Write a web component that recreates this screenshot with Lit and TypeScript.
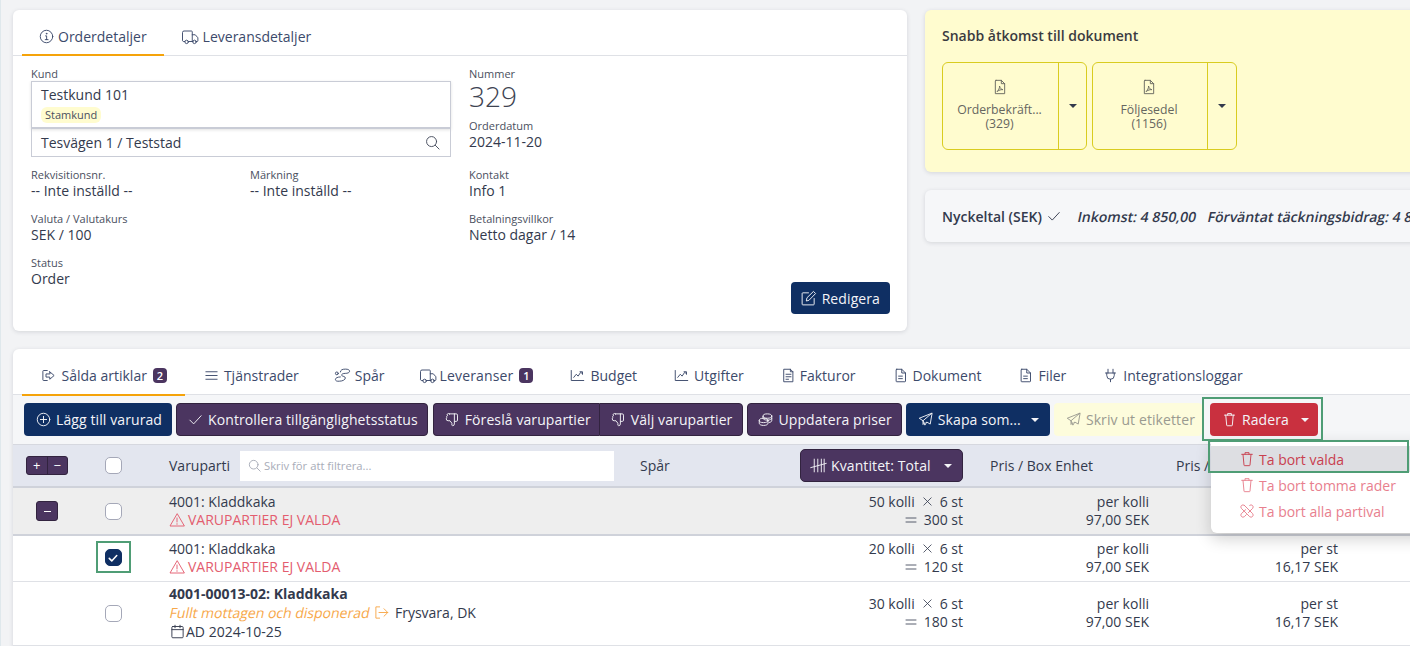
import { LitElement, html, css, svg } from "lit";
import { customElement } from "lit/decorators.js";

const paths: Record<string, any> = {
  info: svg`<circle cx="12" cy="12" r="10"/><path d="M10.500 11h1.700v6M10 17h4.500"/><circle cx="12" cy="7.500" r=".6"/>`,
  truck: svg`<path d="M5 18H3a2 2 0 0 1-1-1V6a2 2 0 0 1 2-2h10a1 1 0 0 1 1 1v13H10"/><path d="M15 9h4l3.500 4v4a1 1 0 0 1-1 1H20"/><path d="M15 18h1"/><circle cx="7.500" cy="18.500" r="2.300"/><circle cx="18" cy="18.500" r="2.300"/>`,
  search: svg`<circle cx="10.500" cy="10.500" r="8"/><path d="m16.500 16.500 6 6"/>`,
  pdf: svg`<path d="M6 2h8l5 5v15H5V3a1 1 0 0 1 1-1z"/><path d="M14 2v5h5"/><path d="M8 18.500c2-1.500 3.500-5 3.300-8 1 3.500 2.500 5 5 5.500-3-.2-5.500.5-8.300 2.500z"/>`,
  check: svg`<path d="M3 13l6 6L21 6"/>`,
  edit: svg`<path d="M12 4H4a1 1 0 0 0-1 1v15a1 1 0 0 0 1 1h15a1 1 0 0 0 1-1v-8"/><path d="M9 15l.8-4L19 2l3 3-9 9.200z"/>`,
  export: svg`<path d="M10 4H4a1 1 0 0 0-1 1v14a1 1 0 0 0 1 1h6"/><path d="M14 6l7 6-7 6v-3.500H8v-5h6z"/>`,
  lines: svg`<path d="M3 6h18M3 12h18M3 18h18"/>`,
  trace: svg`<path d="M9 7c0-3 3-4 7-4s6 1 6 3-3 3-6 3c-3 0-6 1-5 3 1 1.500 5 1 5 3.500S12 20 8 20c-4 .5-6-.5-6-2.500S5 14 9 14"/><circle cx="4" cy="9" r="2"/>`,
  chart: svg`<path d="M2 4v16h20"/><path d="M6 15l4-5 3 3 4-6 3 2"/><path d="M16 6h4v4"/>`,
  invoice: svg`<path d="M5 2h10l4 4v16H5z"/><path d="M15 2v4h4M8 10h8M8 14h8M8 18h4"/>`,
  doc: svg`<path d="M6 2h8l6 6v13a1 1 0 0 1-1 1H6a1 1 0 0 1-1-1V3a1 1 0 0 1 1-1z"/><path d="M14 2v6h6M9 13h6M9 17h6"/>`,
  plug: svg`<path d="M8 2v6M16 2v6M4 8h16M6 8v4a6 6 0 0 0 12 0V8M12 18v4"/>`,
  plus: svg`<circle cx="12" cy="12" r="10"/><path d="M12 7v10M7 12h10"/>`,
  thumb: svg`<path d="M7 3h11a2 2 0 0 1 2 2v8a2 2 0 0 1-2 2h-3v4a3 3 0 0 1-3 3l-1-1v-3l-3-4H5a3 3 0 0 1-3-3 2 2 0 0 1 1-2 2 2 0 0 1 1-3 2 2 0 0 1 3-3z"/><path d="M15 3v12"/>`,
  coins: svg`<ellipse cx="15" cy="6.500" rx="7" ry="3.500"/><path d="M8 7v3c0 1.500 3 3 7 3s7-1.500 7-3V6.500M22 10v4c0 1.200-1.500 2.300-4 2.800"/><ellipse cx="9" cy="13.500" rx="7" ry="3.500"/><path d="M2 13.500V18c0 2 3 3.500 7 3.500s7-1.500 7-3.500v-4.500"/>`,
  send: svg`<path d="M22 2L2 10l6 4 3 7 3-5 5 3z"/><path d="M22 2L8 14v6l3-3"/>`,
  trash: svg`<path d="M4 5h16M9 5V2.500h6V5M6 5l1.500 16a1 1 0 0 0 1 1h7a1 1 0 0 0 1-1L18 5"/>`,
  tally: svg`<path d="M6 3v18M11 3v18M16 3v18M20 3v18M1 15l22-6"/>`,
  warn: svg`<path d="M12 3L1.500 21h21z"/><path d="M12 9v6M12 17.500v1"/>`,
  arrowbox: svg`<path d="M9 3H3v18h6M8 12h14M16 6l6 6-6 6"/>`,
  cal: svg`<rect x="3" y="4" width="18" height="18" rx="1.500"/><path d="M3 9h18M8 2v4M16 2v4"/>`,
  unlink: svg`<path d="M8 3.500l12.500 12.500a3.200 3.200 0 0 1-4.500 4.500L3.500 8a3.200 3.200 0 0 1 4.500-4.500z"/><path d="M16 3.500a3.200 3.200 0 0 1 4.500 4.500L14 14.500M10 10l-6.500 6a3.200 3.200 0 0 0 4.500 4.500l3-3"/>`,
  times: svg`<path d="M4 4l16 16M20 4L4 20"/>`,
  equals: svg`<path d="M2 8h20M2 16h20"/>`,
};

const ico = (n: string, size = 15, sw = 1.500) => html`<svg class="ico i-${n}" width=${size} height=${size} viewBox="0 0 24 24" fill="none" stroke="currentColor" stroke-width=${(sw * 24) / size / 1.600} stroke-linecap="round" stroke-linejoin="round">${paths[n]}</svg>`;

@customElement("app-root")
export class AppRoot extends LitElement {
  static styles = css`
    :host { display: block; width: 1410px; height: 646px; overflow: hidden; position: relative; background: #f2f3f5; font-family: "Open Sans", sans-serif; font-size: 14px; color: #333a4d; line-height: 19px; }
    * { box-sizing: border-box; }
    .ico { flex: none; display: block; }
    .page { display: grid; grid-template-columns: 894px 700px; column-gap: 18px; padding: 10px 0 0 13px; row-gap: 18px; width: 1700px; }
    .card { background: #fff; border-radius: 6px; box-shadow: 0 1px 4px rgba(40,50,70,.15); }
    .details { grid-row: span 2; height: 321px; position: relative; }
    .side { display: flex; flex-direction: column; gap: 18px; }
    .tabs { display: flex; border-bottom: 1px solid #dfe1e6; padding-left: 9px; color: #3c4a6b; }
    .tab { display: flex; align-items: center; gap: 4px; height: 45px; padding: 7px 17px 0; position: relative; }
    .tab.on::after { content: ""; position: absolute; left: 0; right: 0; bottom: -1px; height: 2px; background: #f5a30a; }
    .dbody { padding: 10px 18px 0; display: grid; grid-template-columns: 219px 219px 1fr; }
    .lbl { font-size: 11px; line-height: 15px; color: #4a4f5e; }
    .val { line-height: 18px; }
    .cust { grid-column: span 2; width: 420px; }
    .cbox { border: 1px solid #c9ccd6; height: 48px; padding: 3px 9px 0; box-shadow: 0 1px 3px rgba(0,0,0,.12); border-bottom-width: 2px; }
    .tag { display: inline-block; font-size: 11px; line-height: 16px; background: #fffccf; border-radius: 6px; padding: 0 4px; color: #4a4f5e; margin-top: 2px; }
    .abox { border: 1px solid #c9ccd6; border-top: 0; height: 28px; padding: 0 9px; display: flex; align-items: center; justify-content: space-between; }
    .abox .ico { color: #444b5c; margin-right: 1px; }
    .num { font-size: 28px; font-weight: 300; line-height: 31px; color: #3d4352; margin-bottom: 6px; }
    .f { margin-bottom: 11px; }
    .r2 { margin-top: 10px; }
    .btn { display: inline-flex; align-items: center; gap: 5px; height: 33px; padding: 0 10px 0 12px; border-radius: 4px; color: #f4f4f8; white-space: nowrap; letter-spacing: .1px; }
    .btn.edit { position: absolute; right: 17px; bottom: 17px; height: 32px; padding: 0 10px 0 9px; }
    .navy { background: #0f2f63; }
    .purple { background: #4b3560; border: 1px solid #32233f; padding: 0 9px 0 11px; }
    .red { background: #c9303f; }
    .pale { background: #fdfcdc; color: #9a9a90; padding-right: 7px; }
    .yellow { background: #fffccf; height: 162px; padding: 16px 17px; box-shadow: 0 1px 4px rgba(40,50,70,.15); }
    .yt { font-weight: 600; color: #3a3a40; margin-bottom: 17px; }
    .docs { display: flex; gap: 5px; }
    .doc { display: flex; height: 88px; border: 1px solid #d9cc20; border-radius: 6px; }
    .docm { display: flex; flex-direction: column; align-items: center; justify-content: center; border-right: 1px solid #d9cc20; font-size: 12.25px; line-height: 14px; color: #66665f; gap: 8px; padding: 0 2px 2px 0; }
    .docm div { text-align: center; }
    .docc { width: 27px; display: flex; align-items: center; justify-content: center; color: #333a4d; }
    .doc + .doc .docc { width: 28px; }
    .caret { width: 0; height: 0; border-left: 4px solid transparent; border-right: 4px solid transparent; border-top: 4px solid currentColor; flex: none; }
    .key { background: #f6f7f9; height: 52px; display: flex; align-items: center; padding: 0 17px; gap: 12px; white-space: nowrap; box-shadow: 0 1px 4px rgba(40,50,70,.15); border-radius: 6px; }
    .key b { font-weight: 600; display: flex; align-items: center; gap: 5px; color: #333a4d; margin-right: 5px; }
    .slant { display: inline-block; transform: skewX(-12deg); }
    .key .slant { font-weight: 600; }
    .lower { grid-column: 1 / -1; height: 320px; border-radius: 6px 0 0 0; }
    .tabs2 { height: 46px; padding-left: 9px; padding-top: 1px; }
    .tabs2 .tab { height: 45px; padding: 5px 18.5px 0; gap: 5px; }
    .tabs2 .i-export { margin-right: 1px; }
    .tabs2 .i-trace { margin-left: -2px; margin-right: -1px; }
    .tabs2 .i-truck { margin-left: -3px; margin-right: -2px; }
    .tabs2 .i-invoice { margin-right: -1px; }
    .wide { letter-spacing: .15px; }
    .tab > .i-truck { margin-top: 1px; }
    .badge { background: #4b3560; color: #fff; font-size: 11px; font-weight: 600; line-height: 15px; border-radius: 4px; width: 14px; text-align: center; margin-left: 1px; letter-spacing: 0; }
    .bar { display: flex; gap: 4px; background: #f5f6f8; padding: 8px 11px; height: 50px; border-bottom: 1px solid #d6d8df; }
    .split { display: flex; margin-left: 1px; }
    .split .btn:first-child { border-radius: 4px 0 0 4px; border-right: 0; padding-right: 8px; }
    .split .btn:last-child { border-radius: 0 4px 4px 0; padding-right: 10px; }
    .tight { padding-left: 10px; }
    .skapa { padding-right: 11px; }
    .row { display: grid; grid-template-columns: 72px 56px 28px 471px 160px 163px 186px 189px; align-items: center; border-bottom: 1px solid #dfe1e6; width: 1397px; }
    .head { height: 43px; background: #e3e6ef; border-bottom: 2px solid #cfd2da; }
    .g { background: #eeeeee; height: 48px; border-bottom: 2px solid #cfd2da; padding-bottom: 1px; }
    .w1 { height: 46px; background: #fff; padding-bottom: 2px; }
    .w2 { height: 64px; background: #fff; padding-bottom: 2px; }
    .g .chk, .g .mn { margin-top: 1px; }
    .w2 .chk { margin-top: 2px; }
    .chk { justify-self: center; width: 17px; height: 17px; border: 1px solid #a5a8b8; border-radius: 5px; background: #fff; }
    .chk.on { background: #0f2f63; border-color: #0f2f63; color: #fff; display: flex; align-items: center; justify-content: center; }
    .pm { display: flex; margin-left: 13px; width: 42px; height: 19px; background: #4b3560; border: 1px solid #32233f; border-radius: 3px; color: #fff; font-size: 13px; line-height: 16px; }
    .pm span { flex: 1; text-align: center; }
    .pm span + span { border-left: 1px solid #32233f; }
    .mn { margin-left: 23px; width: 22px; height: 20px; background: #4b3560; border: 1px solid #32233f; border-radius: 3px; color: #fff; display: flex; align-items: center; justify-content: center; }
    .mn::after { content: ""; width: 7px; height: 1px; background: #fff; }
    .vc { display: flex; align-items: center; }
    .vc .t { width: 71px; flex: none; }
    .filter { width: 374px; height: 30px; background: #fff; display: flex; align-items: center; gap: 3px; padding-left: 8px; color: #a8acb8; font-size: 11.25px; }
    .err { color: #e35d6f; display: flex; align-items: center; gap: 3px; line-height: 18px; }
    .qbtn { padding: 0 10px 0 9px; justify-content: space-between; width: 163px; border-radius: 5px; }
    .qt { display: flex; align-items: center; gap: 4px; }
    .p { text-align: right; line-height: 18px; }
    .q { line-height: 18px; }
    .ql { display: flex; justify-content: flex-end; align-items: center; gap: 7px; }
    .hl { padding-left: 27px; white-space: nowrap; }
    .lot { font-weight: 700; }
    .orange { color: #f7a84a; display: flex; align-items: center; gap: 4px; }
    .orange .slant { margin-left: 1px; }
    .plain { color: #333a4d; margin-left: 2px; }
    .ad { display: flex; align-items: center; gap: 1px; padding-left: 1px; }
    .menu { position: absolute; left: 1211px; top: 440px; width: 230px; height: 93px; background: #fff; border-radius: 0 0 0 6px; box-shadow: 0 6px 16px rgba(0,0,0,.18); padding: 6px 0 0; color: #e8808e; z-index: 2; }
    .mi { height: 26px; display: flex; align-items: center; gap: 4px; padding-left: 28px; }
    .mi.sel { background: #dddee2; color: #c9404f; }
    .mark { position: absolute; border: 2px solid #4f9d75; z-index: 3; pointer-events: none; }
    .m1 { left: 1202px; top: 397px; width: 121px; height: 44px; }
    .m2 { left: 1208px; top: 440px; width: 201px; height: 33px; }
    .m3 { left: 96px; top: 541px; width: 35px; height: 32px; }
    .edge { position: absolute; left: 0; top: 0; bottom: 0; width: 1px; background: #dfe8ec; }
  `;

  private field(l: string, v: string) {
    return html`<div class="f"><div class="lbl">${l}</div><div class="val">${v}</div></div>`;
  }

  private qty(a: string, b: string) {
    return html`<div class="q">
      <div class="ql"><span>${a}</span>${ico("times", 11, 1.300)}<span>6 st</span></div>
      <div class="ql">${ico("equals", 12, 1.300)}<span>${b}</span></div>
    </div>`;
  }

  private price(a: string, b: string) {
    return html`<div class="p"><div>${a}</div><div>${b}</div></div>`;
  }

  render() {
    const tabs: [string, string, string?][] = [
      ["export", "Sålda artiklar", "2"], ["lines", "Tjänstrader"], ["trace", "Spår"], ["truck", "Leveranser", "1"],
      ["chart", "Budget"], ["chart", "Utgifter"], ["invoice", "Fakturor"], ["doc", "Dokument"], ["doc", "Filer"], ["plug", "Integrationsloggar"],
    ];
    return html`
      <div class="edge"></div>
      <div class="page">
        <section class="card details">
          <div class="tabs">
            <div class="tab on">${ico("info")}Orderdetaljer</div>
            <div class="tab">${ico("truck", 18)}Leveransdetaljer</div>
          </div>
          <div class="dbody">
            <div class="cust">
              <div class="lbl">Kund</div>
              <div class="cbox"><div>Testkund 101</div><span class="tag">Stamkund</span></div>
              <div class="abox">Tesvägen 1 / Teststad ${ico("search")}</div>
            </div>
            <div>
              <div class="lbl">Nummer</div>
              <div class="num">329</div>
              <div class="lbl">Orderdatum</div>
              <div class="val">2024-11-20</div>
            </div>
            <div class="r2">${this.field("Rekvisitionsnr.", "-- Inte inställd --")}</div>
            <div class="r2">${this.field("Märkning", "-- Inte inställd --")}</div>
            <div class="r2">${this.field("Kontakt", "Info 1")}</div>
            ${this.field("Valuta / Valutakurs", "SEK / 100")}
            <div></div>
            ${this.field("Betalningsvillkor", "Netto dagar / 14")}
            ${this.field("Status", "Order")}
          </div>
          <div class="btn navy edit">${ico("edit", 17)}Redigera</div>
        </section>
        <div class="side">
          <section class="yellow card">
            <div class="yt">Snabb åtkomst till dokument</div>
            <div class="docs">
              <div class="doc"><div class="docm" style="width:116px">${ico("pdf", 16)}<div>Orderbekräft...<br />(329)</div></div><div class="docc"><span class="caret"></span></div></div>
              <div class="doc"><div class="docm" style="width:115px">${ico("pdf", 16)}<div>Följesedel<br />(1156)</div></div><div class="docc"><span class="caret"></span></div></div>
            </div>
          </section>
          <section class="key">
            <b>Nyckeltal (SEK) ${ico("check", 14)}</b>
            <span class="slant">Inkomst: 4 850,00</span>
            <span class="slant">Förväntat täckningsbidrag: 4 850,00</span>
          </section>
        </div>
        <section class="card lower">
          <div class="tabs tabs2">
            ${tabs.map(([i, t, b], n) => html`<div class="tab ${n === 0 ? "on" : ""} ${n === 3 ? "wide" : ""}">${ico(i, i === "truck" ? 18 : i === "trace" ? 17 : 15)}${t}${b ? html`<span class="badge">${b}</span>` : ""}</div>`)}
          </div>
          <div class="bar">
            <div class="btn navy">${ico("plus")}Lägg till varurad</div>
            <div class="btn purple">${ico("check")}Kontrollera tillgänglighetsstatus</div>
            <div class="split">
              <div class="btn purple">${ico("thumb")}Föreslå varupartier</div>
              <div class="btn purple">${ico("thumb")}Välj varupartier</div>
            </div>
            <div class="btn purple tight">${ico("coins")}Uppdatera priser</div>
            <div class="btn navy skapa">${ico("send")}Skapa som...<span class="caret" style="margin-left:5px"></span></div>
            <div class="btn pale">${ico("send")}Skriv ut etiketter</div>
            <div class="btn red" style="margin-left:4px;width:108px">${ico("trash")}Radera<span class="caret" style="margin-left:7px"></span></div>
          </div>
          <div class="row head">
            <div class="pm"><span>+</span><span>−</span></div>
            <div class="chk"></div>
            <div></div>
            <div class="vc"><span class="t">Varuparti</span><div class="filter">${ico("search", 13)}Skriv för att filtrera...</div></div>
            <div>Spår</div>
            <div class="btn purple qbtn"><span class="qt">${ico("tally", 17)}Kvantitet: Total</span><span class="caret"></span></div>
            <div class="hl">Pris / Box Enhet</div>
            <div class="hl">Pris / Enhet</div>
          </div>
          <div class="row g">
            <div class="mn"></div>
            <div class="chk"></div>
            <div></div>
            <div><div>4001: Kladdkaka</div><div class="err">${ico("warn", 16)}VARUPARTIER EJ VALDA</div></div>
            <div></div>
            ${this.qty("50 kolli", "300 st")}
            ${this.price("per kolli", "97,00 SEK")}
            ${this.price("per st", "16,17 SEK")}
          </div>
          <div class="row w1">
            <div></div>
            <div class="chk on">${ico("check", 10, 2.500)}</div>
            <div></div>
            <div><div>4001: Kladdkaka</div><div class="err">${ico("warn", 16)}VARUPARTIER EJ VALDA</div></div>
            <div></div>
            ${this.qty("20 kolli", "120 st")}
            ${this.price("per kolli", "97,00 SEK")}
            ${this.price("per st", "16,17 SEK")}
          </div>
          <div class="row w2">
            <div></div>
            <div class="chk"></div>
            <div></div>
            <div>
              <div class="lot">4001-00013-02: Kladdkaka</div>
              <div class="orange"><span class="slant">Fullt mottagen och disponerad</span>${ico("arrowbox", 15)}<span class="plain">Frysvara, DK</span></div>
              <div class="ad">${ico("cal", 15)}AD 2024-10-25</div>
            </div>
            <div></div>
            ${this.qty("30 kolli", "180 st")}
            ${this.price("per kolli", "97,00 SEK")}
            ${this.price("per st", "16,17 SEK")}
          </div>
        </section>
      </div>
      <div class="menu">
        <div class="mi sel">${ico("trash", 16)}Ta bort valda</div>
        <div class="mi">${ico("trash", 16)}Ta bort tomma rader</div>
        <div class="mi">${ico("unlink", 16)}Ta bort alla partival</div>
      </div>
      <div class="mark m1"></div>
      <div class="mark m2"></div>
      <div class="mark m3"></div>
    `;
  }
}
